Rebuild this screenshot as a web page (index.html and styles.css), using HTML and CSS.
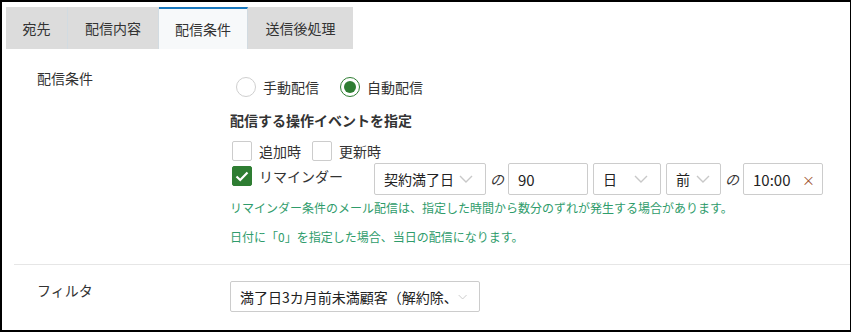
FILE: index.html
```html
<!DOCTYPE html>
<html>
<head>
    <title>配信条件</title>
    <link rel="stylesheet" href="styles.css">
</head>
<body>
    <div class="frame">
        <ul class="tabs">
            <li class="tab">宛先</li>
            <li class="tab">配信内容</li>
            <li class="tab active">配信条件</li>
            <li class="tab">送信後処理</li>
        </ul>

        <div class="row row-condition">
            <div class="row-label">配信条件</div>
            <div class="row-body">
                <div class="radios">
                    <label class="radio"><span class="radio-mark"></span>手動配信</label>
                    <label class="radio checked"><span class="radio-mark"></span>自動配信</label>
                </div>

                <div class="sub-title">配信する操作イベントを指定</div>

                <div class="checks">
                    <label class="check"><span class="check-mark"></span>追加時</label>
                    <label class="check"><span class="check-mark"></span>更新時</label>
                </div>

                <div class="reminder">
                    <label class="check checked reminder-check">
                        <span class="check-mark">
                            <svg width="14" height="11" viewBox="0 0 14 11"><polyline points="1.5,5.5 5.2,9 12.5,1.5" fill="none" stroke="#fff" stroke-width="2.2"/></svg>
                        </span>リマインダー
                    </label>
                    <div class="select w-base">
                        <span>契約満了日</span>
                        <svg class="chev" width="14" height="8" viewBox="0 0 14 8"><polyline points="1,1 7,7 13,1" fill="none" stroke="#c8c8c8" stroke-width="1.4"/></svg>
                    </div>
                    <span class="of">の</span>
                    <div class="field w-num">90</div>
                    <div class="select w-unit">
                        <span>日</span>
                        <svg class="chev" width="14" height="8" viewBox="0 0 14 8"><polyline points="1,1 7,7 13,1" fill="none" stroke="#c8c8c8" stroke-width="1.4"/></svg>
                    </div>
                    <div class="select w-dir">
                        <span>前</span>
                        <svg class="chev" width="14" height="8" viewBox="0 0 14 8"><polyline points="1,1 7,7 13,1" fill="none" stroke="#c8c8c8" stroke-width="1.4"/></svg>
                    </div>
                    <span class="of">の</span>
                    <div class="field w-time">10:00 <span class="clear">×</span></div>
                </div>

                <p class="note">リマインダー条件のメール配信は、指定した時間から数分のずれが発生する場合があります。</p>
                <p class="note note-2">日付に「0」を指定した場合、当日の配信になります。</p>
            </div>
        </div>

        <div class="row row-filter">
            <div class="row-label">フィルタ</div>
            <div class="row-body">
                <div class="select w-filter">
                    <span>満了日3カ月前未満顧客（解約除、</span>
                    <svg class="chev" width="14" height="8" viewBox="0 0 14 8"><polyline points="1,1 7,7 13,1" fill="none" stroke="#c8c8c8" stroke-width="1.4"/></svg>
                </div>
            </div>
        </div>
    </div>
</body>
</html>
```

FILE: styles.css
```css
html, body {
    margin: 0;
    padding: 0;
    background: #fff;
}

body {
    font-family: "Noto Sans CJK JP", "Noto Sans", sans-serif;
    font-size: 14px;
    color: #333;
}

.frame {
    width: 851px;
    height: 332px;
    box-sizing: border-box;
    border: 2px solid #000;
    border-right-width: 1px;
    overflow: hidden;
}

/* タブ */
.tabs {
    display: flex;
    list-style: none;
    margin: 5px 0 0 4px;
    padding: 0;
    height: 42px;
}

.tab {
    background-color: #dcdcdc;
    padding: 0 17px;
    line-height: 42px;
    border-right: 1px solid #d2dbe1;
    box-sizing: border-box;
    white-space: nowrap;
}

.tab:first-child {
    width: 62px;
    padding: 0;
    text-align: center;
}

.tab.active {
    background-color: #f7f9fa;
    border-top: 2px solid #1878be;
    line-height: 40px;
    width: 89px;
    padding: 0;
    text-align: center;
}

.tab:last-child {
    width: 105px;
    padding: 0;
    text-align: center;
    border-right: none;
}

/* 行 */
.row {
    display: grid;
    grid-template-columns: 216px 1fr;
    margin-left: 12px;
}

.row-label {
    padding-left: 23px;
    line-height: 22px;
}

.row-condition {
    padding-top: 18px;
    padding-bottom: 19px;
    border-bottom: 1px solid #e6e6e6;
}

.row-filter {
    padding-top: 16px;
}

.row-filter .row-label {
    line-height: 18px;
}

/* ラジオ */
.radios {
    display: flex;
    margin-top: 10px;
    margin-left: 6px;
}

.radio {
    display: flex;
    align-items: center;
    height: 20px;
    line-height: 20px;
    margin-right: 21px;
}

.radio-mark {
    width: 20px;
    height: 20px;
    box-sizing: border-box;
    border: 1px solid #cfcfcf;
    border-radius: 50%;
    margin-right: 7px;
    display: flex;
    align-items: center;
    justify-content: center;
}

.radio.checked .radio-mark {
    border-color: #2e7d32;
}

.radio.checked .radio-mark::after {
    content: "";
    width: 12px;
    height: 12px;
    border-radius: 50%;
    background-color: #2e7d32;
}

.sub-title {
    font-weight: bold;
    line-height: 20px;
    margin-top: 13px;
}

/* チェックボックス */
.checks {
    display: flex;
    margin-top: 11px;
    margin-left: 2px;
}

.check {
    display: flex;
    align-items: center;
    height: 20px;
    line-height: 20px;
    margin-right: 11px;
}

.check-mark {
    width: 20px;
    height: 20px;
    box-sizing: border-box;
    border: 1px solid #cccccc;
    border-radius: 2px;
    margin-right: 7px;
    display: flex;
    align-items: center;
    justify-content: center;
    background: #fff;
}

.check.checked .check-mark {
    background-color: #2e7d32;
    border-color: #2e7d32;
}

.reminder {
    display: flex;
    align-items: flex-start;
    gap: 5px;
    margin-top: 2px;
    margin-left: 2px;
}

.reminder-check {
    width: 137px;
    margin: 3px 0 0 0;
    line-height: 18px;
}

/* セレクト・入力 */
.select, .field {
    display: flex;
    align-items: center;
    height: 32px;
    box-sizing: border-box;
    border: 1px solid #cccccc;
    border-radius: 2px;
    background: #fff;
    color: #222;
    white-space: nowrap;
}

.select {
    justify-content: space-between;
    padding: 0 12px 0 9px;
}

.field {
    padding: 0 9px;
    font-size: 15px;
}

.w-base { width: 112px; }
.w-num { width: 80px; }
.w-unit { width: 68px; }
.w-dir { width: 55px; padding-right: 10px; }
.w-time { width: 80px; justify-content: space-between; padding-right: 7px; }

.w-filter {
    width: 250px;
    height: 31px;
}

.of {
    line-height: 32px;
    margin: 0 -1px;
    font-style: italic;
}

.clear {
    color: #a0522d;
    font-size: 13px;
}

/* 注記 */
.note {
    margin: 5px 0 0 0;
    font-size: 12px;
    line-height: 16px;
    color: #2f9c6b;
}

.note-2 {
    margin-top: 13px;
}
```
